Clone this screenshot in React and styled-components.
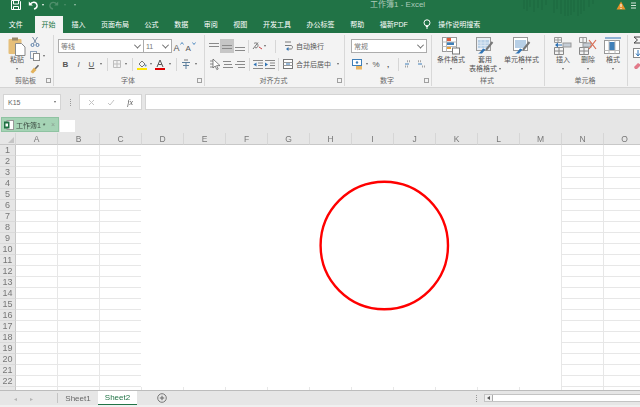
import React from 'react';
import styled, { createGlobalStyle } from 'styled-components';

const GlobalStyle = createGlobalStyle`
  html, body {
    margin: 0;
    padding: 0;
    background: #e6e6e6;
  }
  * {
    box-sizing: border-box;
  }
`;

const Page = styled.div`
  width: 640px;
  height: 407px;
  overflow: hidden;
  display: flex;
  flex-direction: column;
  font-family: "Liberation Sans", "Noto Sans CJK SC", sans-serif;
  font-size: 7px;
  color: #555;
  filter: blur(0.3px);
`;

const TitleBar = styled.div`
  height: 16px;
  flex: none;
  background: #217346;
  display: flex;
  align-items: flex-start;
  padding-left: 11px;
  color: #c3dccd;
`;

const QatSlot = styled.div`
  width: ${(p) => p.$w}px;
  height: 10px;
  flex: none;
  display: flex;
  align-items: center;
  justify-content: ${(p) => p.$justify || 'center'};
`;

const WindowTitle = styled.div`
  margin-left: 287px;
  width: 158px;
  height: 10px;
  line-height: 10px;
  white-space: nowrap;
  font-size: 8px;
  opacity: 0.85;
`;

const TabRow = styled.div`
  height: 17px;
  flex: none;
  background: #217346;
  display: flex;
  padding-left: 1px;
  color: #fff;
`;

const Tab = styled.div`
  padding: 0 7.8px 2px;
  height: 17px;
  display: flex;
  align-items: center;
  white-space: nowrap;
  gap: 7px;
`;

const ActiveTab = styled(Tab)`
  background: #f3f3f3;
  color: #217346;
  padding: 0 7px 2px;
  margin: 0 1px 0 4px;
`;

const Ribbon = styled.div`
  height: 55px;
  flex: none;
  background: #f3f3f3;
  border-bottom: 1px solid #d4d4d4;
  display: flex;
`;

const Group = styled.div`
  width: ${(p) => p.$w}px;
  flex: none;
  display: flex;
  flex-direction: column;
  border-right: 1px solid #d8d8d8;
  margin: 2px 0 1px;
  padding-left: ${(p) => p.$pad || 0}px;
`;

const GroupBody = styled.div`
  flex: 1;
  display: flex;
  min-height: 0;
`;

const Stack = styled.div`
  display: flex;
  flex-direction: column;
  margin-left: ${(p) => p.$left || 0}px;
`;

const ToolsColumn = styled(Stack)`
  padding-left: 5px;
  gap: 4px;
  margin-top: 3px;
`;

const GroupFooter = styled.div`
  height: 12px;
  flex: none;
  display: grid;
  grid-template-columns: 1fr auto 1fr;
  align-items: center;
  color: #666;
  margin-left: ${(p) => -(p.$pad || 0)}px;
  padding-right: 2px;
`;

const Launcher = styled.div`
  grid-column: 3;
  justify-self: end;
  width: 5px;
  height: 5px;
  border: 1px solid #a0a0a0;
`;

const GroupLabel = styled.div`
  grid-column: 2;
  white-space: nowrap;
`;

const Row = styled.div`
  display: flex;
  align-items: center;
  height: ${(p) => p.$h || 14}px;
  margin-top: ${(p) => p.$top || 0}px;
`;

const Slot = styled.div`
  width: ${(p) => p.$w || 12}px;
  height: 14px;
  flex: none;
  display: flex;
  align-items: center;
  justify-content: center;
  background: ${(p) => (p.$on ? '#c6c6c6' : 'transparent')};
  color: #555;
  font-weight: ${(p) => (p.$bold ? 700 : 400)};
  font-style: ${(p) => (p.$italic ? 'italic' : 'normal')};
  text-decoration: ${(p) => (p.$under ? 'underline' : 'none')};
  font-size: ${(p) => p.$size || 8}px;
`;

const Caret = styled.span`
  display: block;
  width: 0;
  height: 0;
  border-left: 1.5px solid transparent;
  border-right: 1.5px solid transparent;
  border-top: 2px solid ${(p) => p.$color || '#666'};
`;

const Divider = styled.div`
  width: ${(p) => p.$w || 7}px;
  height: 13px;
  flex: none;
  display: flex;
  justify-content: center;
  &::before {
    content: '';
    width: 1px;
    background: #d6d6d6;
  }
`;

const Select = styled.div`
  width: ${(p) => p.$w}px;
  height: 14px;
  flex: none;
  background: #fff;
  border: 1px solid #acacac;
  display: flex;
  align-items: center;
  justify-content: space-between;
  padding: 0 3px 0 2px;
  color: #777;
  margin-left: -1px;
`;

const Chevron = styled.span`
  width: 5px;
  height: 5px;
  border-right: 1px solid #666;
  border-bottom: 1px solid #666;
  transform: rotate(45deg) translate(-1px, -1px);
`;

const TextAction = styled.div`
  display: flex;
  align-items: center;
  gap: 1px;
  white-space: nowrap;
  color: #555;
  margin-left: ${(p) => p.$left || 0}px;
`;

const BigButton = styled.div`
  width: ${(p) => p.$w}px;
  flex: none;
  display: flex;
  flex-direction: column;
  align-items: center;
  line-height: 9px;
  white-space: nowrap;
  color: #555;
  padding-top: 2px;
  margin-right: ${(p) => p.$gap || 0}px;
`;

const BigIcon = styled.div`
  height: 18px;
  display: flex;
  align-items: flex-start;
`;

const CaretLine = styled.div`
  height: 9px;
  display: flex;
  align-items: center;
  gap: 2px;
`;

const FormulaRow = styled.div`
  height: 22px;
  flex: none;
  background: #e6e6e6;
  padding: 6px 0 0 3px;
  display: flex;
`;

const NameBox = styled.div`
  width: 58px;
  background: #fff;
  border: 1px solid #d4d4d4;
  display: flex;
  align-items: center;
  justify-content: space-between;
  padding: 0 4px;
  font-size: 7px;
  color: #666;
`;

const Grip = styled.div`
  width: 18px;
  display: flex;
  justify-content: center;
  align-items: center;
  &::before {
    content: '';
    height: 7px;
    border-left: 1px dotted #999;
  }
`;

const FxBox = styled.div`
  width: 63px;
  background: #fff;
  border: 1px solid #d4d4d4;
  display: flex;
  align-items: center;
  justify-content: space-around;
  padding: 0 2px;
`;

const FxLabel = styled.span`
  font-style: italic;
  font-family: "Liberation Serif", serif;
  font-size: 8px;
`;

const FormulaInput = styled.div`
  flex: 1;
  margin-left: 3px;
  background: #fff;
  border: 1px solid #d4d4d4;
  border-right: none;
`;

const BookStrip = styled.div`
  height: 23px;
  flex: none;
  background: #e6e6e6;
  display: flex;
  align-items: flex-end;
  padding: 0 0 1px 1px;
`;

const BookTab = styled.div`
  width: 58px;
  height: 15px;
  background: #a5d3b5;
  border: 1px solid #8fc3a2;
  display: flex;
  align-items: center;
  padding: 0 3px 0 2px;
  gap: 2px;
  color: #3c4a41;
  white-space: nowrap;
`;

const BookClose = styled.span`
  margin-left: auto;
  color: #8a9d90;
  font-size: 7px;
`;

const NewBook = styled.div`
  width: 15px;
  height: 12px;
  background: #fff;
  margin-left: 1px;
`;

const Sheet = styled.div`
  flex: 1;
  min-height: 0;
  position: relative;
  background: #fff;
  overflow: hidden;
  display: grid;
  grid-template-columns: 16px repeat(15, 42px);
  grid-template-rows: 12px;
  grid-auto-rows: 11px;
`;

const HeaderCell = styled.div`
  background: #e6e6e6;
  border-right: 1px solid #d6d6d6;
  border-bottom: 1px solid #c8c8c8;
  display: flex;
  align-items: center;
  justify-content: center;
  font-size: 8.5px;
  color: #777;
`;

const Corner = styled(HeaderCell)`
  justify-content: flex-end;
  align-items: flex-end;
  padding: 0 1px 1px 0;
  &::after {
    content: '';
    border-left: 6px solid transparent;
    border-bottom: 6px solid #c4c4c4;
  }
`;

const RowHead = styled(HeaderCell)`
  border-bottom: 1px solid #dadada;
  border-right: 1px solid #c8c8c8;
  font-size: 9px;
`;

const Cell = styled.div`
  border-right: 1px solid #e7e7e7;
  border-bottom: 1px solid #e7e7e7;
`;

// the white picture pasted over the cells, the circle sits on it
const PastedShape = styled.svg`
  position: absolute;
  left: 141px;
  top: 12px;
  display: block;
`;

const SheetBar = styled.div`
  height: 15px;
  flex: none;
  background: #e6e6e6;
  border-top: 1px solid #bcbcbc;
  display: flex;
  align-items: stretch;
`;

const NavArrows = styled.div`
  width: 58px;
  display: flex;
  align-items: center;
  gap: 13px;
  padding-left: 14px;
  border-right: 1px solid #c4c4c4;
  margin: 2px 0;
  color: #b5b5b5;
  font-size: 6px;
`;

const SheetTab = styled.div`
  width: ${(p) => p.$w}px;
  display: flex;
  align-items: center;
  justify-content: center;
  font-size: 8px;
  color: ${(p) => (p.$on ? '#217346' : '#666')};
  background: ${(p) => (p.$on ? '#fff' : 'transparent')};
  border-bottom: ${(p) => (p.$on ? '1px solid #217346' : 'none')};
`;

const AddSheet = styled.div`
  margin-left: 20px;
  display: flex;
  align-items: center;
`;

const ScrollZone = styled.div`
  margin-left: auto;
  width: 164px;
  display: flex;
  align-items: center;
  gap: 7px;
`;

const VGrip = styled.div`
  height: 7px;
  border-left: 1px dotted #999;
`;

const ScrollBar = styled.div`
  flex: 1;
  height: 8px;
  background: #fff;
  border: 1px solid #c4c4c4;
  border-right: none;
  display: flex;
`;

const ScrollArrow = styled.div`
  width: 8px;
  border-right: 1px solid #aaa;
  background: #f1f1f1;
  display: flex;
  align-items: center;
  justify-content: center;
  &::before {
    content: '';
    border-right: 3px solid #555;
    border-top: 2px solid transparent;
    border-bottom: 2px solid transparent;
  }
`;

const BottomStrip = styled.div`
  height: 2px;
  flex: none;
  background: #f0f0f0;
`;

const Ico = ({ w = 12, h = 12, children }) => (
  <svg width={w} height={h} viewBox={`0 0 ${w} ${h}`} fill="none">
    {children}
  </svg>
);

const Lines = ({ ys, x1 = 1, x2 = 11, c = '#8a8a8a' }) => (
  <path d={ys.map((y) => `M${x1} ${y}H${x2}`).join('')} stroke={c} />
);

const SaveIcon = () => (
  <Ico w={10} h={10}>
    <path d="M.5.5h8l1 1v8h-9z" stroke="#fff" />
    <path d="M2.5 1v3h5V1M2.5 9.5V6.5h5v3" stroke="#fff" />
  </Ico>
);

const UndoIcon = () => (
  <Ico w={10} h={10}>
    <path d="M2 4.5c2-3 6-3 7 .5.4 2-1 3.5-3 4" stroke="#fff" strokeWidth="1.4" />
    <path d="M.8 1.5v4h4z" fill="#fff" />
  </Ico>
);

const RedoIcon = () => (
  <Ico w={10} h={10}>
    <path d="M8 4.5c-2-3-6-3-7 .5-.4 2 1 3.5 3 4" stroke="#4f8f6b" strokeWidth="1.3" />
    <path d="M9.2 1.5v4h-4z" fill="#4f8f6b" />
  </Ico>
);

const stripes = [
  [0, 9], [3, 11], [6, 7], [10, 12], [14, 8], [18, 10], [22, 5], [30, 13], [33, 9], [37, 14],
  [41, 16], [44, 16], [47, 15], [50, 12], [54, 16], [57, 14], [60, 11], [65, 7], [69, 4],
];

const TitlePattern = () => (
  <svg width="78" height="16" style={{ flex: 'none' }}>
    {stripes.map(([x, h]) => (
      <rect key={x} x={x} y="0" width="2" height={h} fill="#1e6d42" />
    ))}
  </svg>
);

const WarnIcon = () => (
  <Ico w={10} h={9}>
    <path d="M5 .5l4.5 8h-9z" fill="#e8932b" />
    <path d="M5 3v3M5 7v1" stroke="#fff" />
  </Ico>
);

const MenuIcon = () => (
  <Ico w={5} h={7}>
    <path d="M0 1h5M0 3.5h5M0 6h5" stroke="#d5e6db" />
  </Ico>
);

const BulbIcon = () => (
  <Ico w={8} h={10}>
    <circle cx="4" cy="3.8" r="3" stroke="#fff" />
    <path d="M2.8 7.5h2.4M3 9h2" stroke="#fff" />
  </Ico>
);

const PasteIcon = () => (
  <Ico w={18} h={19}>
    <rect x="0.5" y="2" width="13" height="15" rx="1" fill="#e6bf7a" />
    <rect x="4" y="0.5" width="6" height="3" fill="#9a8a6c" />
    <path d="M7.5 6.5h6l3.5 3.5v8.5H7.5z" fill="#fff" stroke="#8a8a8a" />
  </Ico>
);

const ScissorsIcon = () => (
  <Ico w={10} h={10}>
    <path d="M2.5 0l4 6.5M7.5 0l-4 6.5" stroke="#7a8ea6" />
    <circle cx="2.5" cy="8" r="1.5" stroke="#5a7ea8" />
    <circle cx="7.5" cy="8" r="1.5" stroke="#5a7ea8" />
  </Ico>
);

const CopyIcon = () => (
  <Ico w={10} h={10}>
    <rect x=".5" y=".5" width="6" height="7" fill="#f7f7f7" stroke="#8da3bd" />
    <rect x="3.5" y="2.5" width="6" height="7" fill="#fff" stroke="#8a8a8a" />
  </Ico>
);

const BrushIcon = () => (
  <Ico w={10} h={10}>
    <path d="M5 5L8.5 1.2" stroke="#666" strokeWidth="1.6" />
    <path d="M.5 8l3.5-4.5 2.5 2.5L3 9.5z" fill="#e2b25c" />
  </Ico>
);

const ResizeFontIcon = ({ up, size }) => (
  <Ico w={11} h={11}>
    <text x="0.5" y="10" fontSize={size} fill="#555" fontFamily="Liberation Sans, sans-serif">A</text>
    <path d={up ? 'M7.5 3.5L9 1.5l1.5 2' : 'M7.5 1.5L9 3.5l1.5-2'} stroke="#2f73b5" strokeWidth=".8" />
  </Ico>
);

const BorderIcon = () => (
  <Ico w={10} h={10}>
    <path d="M1.5 1.5h7v7h-7zM5 1.5v7M1.5 5h7" stroke="#bdbdbd" />
  </Ico>
);

const FillIcon = () => (
  <Ico w={10} h={11}>
    <path d="M2 5l3-3 3 3-3 3z" fill="#f4f4f4" stroke="#777" />
    <circle cx="8.6" cy="6.5" r="1" fill="#5c8ec0" />
    <rect x="0" y="9" width="10" height="2" fill="#ffe600" />
  </Ico>
);

const FontColorIcon = () => (
  <Ico w={10} h={11}>
    <path d="M2 8l3-7 3 7M3.2 5.5h3.6" stroke="#555" />
    <rect x="0" y="9" width="10" height="2" fill="#e00000" />
  </Ico>
);

const PhoneticIcon = () => (
  <Ico w={10} h={11}>
    <path d="M1 3.5h8M5 3v7M2 6.5h6" stroke="#5d7f9c" />
    <path d="M3 1h4" stroke="#777" />
  </Ico>
);

const AlignV = ({ ys }) => (
  <Ico>
    <Lines ys={ys} />
  </Ico>
);

const AlignH = ({ lines }) => (
  <Ico>
    {lines.map(([y, x1, x2]) => (
      <path key={y} d={`M${x1} ${y}H${x2}`} stroke="#8a8a8a" />
    ))}
  </Ico>
);

const OrientIcon = () => (
  <Ico w={11} h={10}>
    <path d="M1 8L6 1.5M2 2.5c2-1.5 4 0 4 2s-2 3-3 2" stroke="#777" />
    <path d="M7 6l3 2" stroke="#c44" />
  </Ico>
);

const CursorIcon = () => (
  <Ico w={12} h={13}>
    <path d="M1 3h4M1 6h3M1 9h3" stroke="#8a8a8a" />
    <path d="M4 1v9l2.2-2 1.6 3.6 1.4-.6-1.6-3.4H11z" fill="#fff" stroke="#555" strokeWidth=".7" />
  </Ico>
);

const IndentIcon = ({ flip }) => (
  <Ico w={10} h={9}>
    <path d="M0 .5h10M5 3h5M5 5.5h5M0 8.5h10" stroke="#8a8a8a" />
    <path d={flip ? 'M0 2.5v4l3-2z' : 'M3.5 2.5v4l-3-2z'} fill="#2f73b5" />
  </Ico>
);

const WrapIcon = () => (
  <Ico w={9} h={10}>
    <path d="M1 1h6M1 4.5h6c2 0 2 3.5 0 3.5H4" stroke="#7b7b7b" />
    <path d="M4.5 6v4L2 8z" fill="#2f73b5" />
  </Ico>
);

const MergeIcon = () => (
  <Ico w={10} h={10}>
    <rect x=".5" y=".5" width="9" height="9" fill="#fff" stroke="#777" />
    <path d="M.5 3.5h9M.5 6.5h9" stroke="#999" />
    <path d="M3 5h4" stroke="#2f73b5" />
  </Ico>
);

const AccountingIcon = () => (
  <Ico w={11} h={11}>
    <rect x=".5" y=".5" width="9" height="6" fill="#fff" stroke="#3f7fb8" />
    <circle cx="5" cy="3.5" r="1.2" fill="#3f7fb8" />
    <rect x="4" y="7" width="6" height="3.5" fill="#eab562" />
  </Ico>
);

const DecimalIcon = ({ more }) => (
  <Ico w={10} h={10}>
    <path d={more ? 'M3 2.2h4M1 7.5h4' : 'M1 2.2h4M5 7.5h4'} stroke="#a5a5a5" strokeDasharray="1 1" strokeWidth="2" />
    <path d="M1 5h4" stroke="#3f7fb8" />
  </Ico>
);

const CondIcon = () => (
  <Ico w={18} h={18}>
    <rect x=".5" y=".5" width="14" height="14" fill="#fff" stroke="#9a9a9a" />
    <rect x="5" y="1" width="4" height="3" fill="#e05a3a" />
    <rect x="5" y="5" width="7" height="3" fill="#3f7fb8" />
    <rect x="5" y="9" width="4" height="3" fill="#e8a23a" />
    <path d="M.5 5h14M.5 9.5h14M4.5.5v14" stroke="#bbb" />
    <rect x="10.5" y="11" width="7" height="6" fill="#fff" stroke="#777" />
  </Ico>
);

const TableFormatIcon = ({ light }) => (
  <Ico w={18} h={18}>
    <rect x=".5" y=".5" width="14" height="13" fill={light ? '#fff' : '#e9eef5'} stroke="#999" />
    <rect x="2" y="3" width="11" height="8" fill="#b7cfe6" />
    {!light && <path d="M5 3v8M9 3v8M2 6h11M2 8.5h11" stroke="#dbe6f2" />}
    <path d="M16.5 5L10 13" stroke="#777" strokeWidth="2" />
    <path d="M9.5 12.5L6 16.5h-4c2-.5 3.5-3 5-5z" fill="#2f73b5" />
  </Ico>
);

const CellGrid = () => (
  <path d="M.5 10.5h9v7h-9zM5 10.5v7M.5 14h9" stroke="#888" />
);

const InsertIcon = () => (
  <Ico w={18} h={18}>
    <path d="M.5.5h7v5h-7zM.5 3h7M4 .5v5" stroke="#999" />
    <CellGrid />
    <rect x="9" y="6" width="8" height="4" fill="#c5cdd6" stroke="#999" />
    <path d="M8 8H2" stroke="#2f73b5" />
    <path d="M4 5.5v5L1 8z" fill="#2f73b5" />
  </Ico>
);

const DeleteIcon = () => (
  <Ico w={18} h={18}>
    <path d="M.5.5h7v5h-7zM4 .5v5" stroke="#999" />
    <CellGrid />
    <rect x="4" y="6" width="8" height="4" fill="#c5cdd6" stroke="#999" />
    <path d="M10 3l7 9M17 3l-7 9" stroke="#d96a50" strokeWidth="1.2" />
  </Ico>
);

const FormatIcon = () => (
  <Ico w={18} h={18}>
    <path d="M1 1h16" stroke="#2f73b5" />
    <rect x=".5" y="3.5" width="15" height="13" fill="#fff" stroke="#999" />
    <rect x="5" y="5" width="6" height="8" fill="#3f7fb8" />
    <path d="M5 3.5v13M11 3.5v13M.5 13.5h15" stroke="#bbb" />
  </Ico>
);

const SumIcon = () => (
  <Ico w={9} h={8}>
    <path d="M8 1H1l3.5 3L1 7h7" stroke="#444" />
  </Ico>
);

const FillDownIcon = () => (
  <Ico w={9} h={10}>
    <rect x=".5" y=".5" width="8" height="9" fill="#fff" stroke="#888" />
    <path d="M5 2v5M3 5.5L5 8l2-2.5" stroke="#2f73b5" />
  </Ico>
);

const EraserIcon = () => (
  <Ico w={9} h={8}>
    <path d="M1 5l4-4 3 2-4 4H2z" fill="#e27a8a" />
  </Ico>
);

const BookIcon = () => (
  <Ico w={10} h={10}>
    <rect x="3" y=".5" width="6.5" height="9" fill="#fff" stroke="#999" />
    <rect x="0" y="1.5" width="5.5" height="7" fill="#1e6e42" />
    <rect x="1.5" y="3.5" width="2.5" height="3" fill="#fff" />
  </Ico>
);

const PlusCircle = () => (
  <Ico w={10} h={10}>
    <circle cx="5" cy="5" r="4.3" stroke="#777" />
    <path d="M2.8 5h4.4M5 2.8v4.4" stroke="#666" />
  </Ico>
);

const columns = 'ABCDEFGHIJKLMNO'.split('');
const rowNumbers = Array.from({ length: 23 }, (_, i) => i + 1);

const tabs = ['插入', '页面布局', '公式', '数据', '审阅', '视图', '开发工具', '办公标签', '帮助', '福新PDF'];

const Footer = ({ label, pad, launcher = true }) => (
  <GroupFooter $pad={pad}>
    <GroupLabel>{label}</GroupLabel>
    {launcher && <Launcher />}
  </GroupFooter>
);

const bigStyles = [
  { w: 36, icon: <CondIcon />, lines: ['条件格式'] },
  { w: 30, icon: <TableFormatIcon />, lines: ['套用', '表格格式'] },
  { w: 41, icon: <TableFormatIcon light />, lines: ['单元格样式'] },
];

const bigCells = [
  { icon: <InsertIcon />, label: '插入' },
  { icon: <DeleteIcon />, label: '删除' },
  { icon: <FormatIcon />, label: '格式' },
];

export default function App() {
  return (
    <>
      <GlobalStyle />
      <Page>
        <TitleBar>
          <QatSlot $w={14} $justify="flex-start"><SaveIcon /></QatSlot>
          <QatSlot $w={16}><UndoIcon /></QatSlot>
          <QatSlot $w={4}><Caret $color="#fff" /></QatSlot>
          <QatSlot $w={18}><RedoIcon /></QatSlot>
          <QatSlot $w={4}><Caret $color="#4f8f6b" /></QatSlot>
          <QatSlot $w={16}><Caret $color="#9cc4ad" /></QatSlot>
          <WindowTitle>工作簿1 - Excel</WindowTitle>
          <TitlePattern />
          <QatSlot $w={25} $justify="flex-end"><WarnIcon /></QatSlot>
          <QatSlot $w={14}><MenuIcon /></QatSlot>
        </TitleBar>

        <TabRow>
          <Tab>文件</Tab>
          <ActiveTab>开始</ActiveTab>
          {tabs.map((t) => (
            <Tab key={t}>{t}</Tab>
          ))}
          <Tab>
            <BulbIcon />
            操作说明搜索
          </Tab>
        </TabRow>

        <Ribbon>
          <Group $w={54}>
            <GroupBody>
              <BigButton $w={34}>
                <BigIcon><PasteIcon /></BigIcon>
                粘贴
                <CaretLine><Caret /></CaretLine>
              </BigButton>
              <Stack $left={-4}>
                <Row $h={14}><Slot $w={10}><ScissorsIcon /></Slot></Row>
                <Row $h={13}>
                  <Slot $w={10}><CopyIcon /></Slot>
                  <Slot $w={7}><Caret /></Slot>
                </Row>
                <Row $h={13}><Slot $w={10}><BrushIcon /></Slot></Row>
              </Stack>
            </GroupBody>
            <Footer label="剪贴板" />
          </Group>

          <Group $w={151} $pad={5}>
            <GroupBody>
              <Stack>
                <Row $top={4}>
                  <Select $w={86}>等线<Chevron /></Select>
                  <Select $w={29}>11<Chevron /></Select>
                  <Slot $w={13}><ResizeFontIcon up size={9} /></Slot>
                  <Slot $w={11}><ResizeFontIcon size={8} /></Slot>
                </Row>
                <Row $top={4}>
                  <Slot $w={13} $bold>B</Slot>
                  <Slot $w={13} $italic>I</Slot>
                  <Slot $w={13} $under>U</Slot>
                  <Slot $w={6}><Caret /></Slot>
                  <Divider />
                  <Slot $w={12}><BorderIcon /></Slot>
                  <Slot $w={6}><Caret /></Slot>
                  <Divider />
                  <Slot $w={11}><FillIcon /></Slot>
                  <Slot $w={7}><Caret /></Slot>
                  <Slot $w={12}><FontColorIcon /></Slot>
                  <Slot $w={7}><Caret /></Slot>
                  <Divider />
                  <Slot $w={12}><PhoneticIcon /></Slot>
                  <Slot $w={7}><Caret /></Slot>
                </Row>
              </Stack>
            </GroupBody>
            <Footer label="字体" pad={5} />
          </Group>

          <Group $w={140} $pad={3}>
            <GroupBody>
              <Stack>
                <Row $top={4}>
                  <Slot $w={12}><AlignV ys={[3.5, 6.5]} /></Slot>
                  <Slot $w={14} $on><AlignV ys={[5.5, 8.5]} /></Slot>
                  <Slot $w={12}><AlignV ys={[7.5, 10.5]} /></Slot>
                  <Divider $w={4} />
                  <Slot $w={14}><OrientIcon /></Slot>
                  <Caret />
                  <Divider $w={18} />
                  <TextAction><WrapIcon />&nbsp;自动换行</TextAction>
                </Row>
                <Row $top={4}>
                  <Slot $w={13}><CursorIcon /></Slot>
                  <Slot $w={13}><AlignH lines={[[3.5, 1, 9], [6.5, 2, 10], [9.5, 1, 11]]} /></Slot>
                  <Slot $w={12}><AlignH lines={[[3.5, 3, 11], [6.5, 1, 11], [9.5, 4, 11]]} /></Slot>
                  <Divider $w={6} />
                  <Slot $w={11}><IndentIcon /></Slot>
                  <Slot $w={13}><IndentIcon flip /></Slot>
                  <Divider $w={4} />
                  <TextAction $left={3}>
                    <MergeIcon />&nbsp;合并后居中
                    <Slot $w={12}><Caret /></Slot>
                  </TextAction>
                </Row>
              </Stack>
            </GroupBody>
            <Footer label="对齐方式" pad={3} />
          </Group>

          <Group $w={87} $pad={7}>
            <GroupBody>
              <Stack>
                <Row $top={4}>
                  <Select $w={76}>常规<Chevron /></Select>
                </Row>
                <Row $top={4}>
                  <Slot $w={11}><AccountingIcon /></Slot>
                  <Slot $w={7}><Caret /></Slot>
                  <Slot $w={12} $size={8}>%</Slot>
                  <Slot $w={12} $bold $size={8}>,</Slot>
                  <Divider $w={8} />
                  <Slot $w={13}><DecimalIcon more /></Slot>
                  <Slot $w={13}><DecimalIcon /></Slot>
                </Row>
              </Stack>
            </GroupBody>
            <Footer label="数字" pad={7} />
          </Group>

          <Group $w={113} $pad={1}>
            <GroupBody>
              {bigStyles.map((b) => (
                <BigButton key={b.lines[0]} $w={b.w} $gap={1}>
                  <BigIcon>{b.icon}</BigIcon>
                  {b.lines[0]}
                  <CaretLine>
                    {b.lines[1]}
                    <Caret />
                  </CaretLine>
                </BigButton>
              ))}
            </GroupBody>
            <Footer label="样式" pad={1} launcher={false} />
          </Group>

          <Group $w={83} $pad={6}>
            <GroupBody>
              {bigCells.map((b) => (
                <BigButton key={b.label} $w={24} $gap={1}>
                  <BigIcon>{b.icon}</BigIcon>
                  {b.label}
                  <CaretLine><Caret /></CaretLine>
                </BigButton>
              ))}
            </GroupBody>
            <Footer label="单元格" pad={6} launcher={false} />
          </Group>

          <ToolsColumn>
            <SumIcon />
            <FillDownIcon />
            <EraserIcon />
          </ToolsColumn>
        </Ribbon>

        <FormulaRow>
          <NameBox>K15<Caret /></NameBox>
          <Grip />
          <FxBox>
            <Ico w={7} h={7}><path d="M1 1l5 5M6 1L1 6" stroke="#c4c4c4" /></Ico>
            <Ico w={8} h={7}><path d="M1 4l2 2 4-5" stroke="#c4c4c4" /></Ico>
            <FxLabel>fx</FxLabel>
          </FxBox>
          <FormulaInput />
        </FormulaRow>

        <BookStrip>
          <BookTab>
            <BookIcon />
            工作簿1 *
            <BookClose>×</BookClose>
          </BookTab>
          <NewBook />
        </BookStrip>

        <Sheet>
          <Corner />
          {columns.map((c) => (
            <HeaderCell key={c}>{c}</HeaderCell>
          ))}
          {rowNumbers.map((n) => (
            <React.Fragment key={n}>
              {/* row 23 is only a sliver above the sheet bar, its number does not show */}
              <RowHead>{n < 23 ? n : ''}</RowHead>
              {columns.map((c) => (
                <Cell key={c} />
              ))}
            </React.Fragment>
          ))}
          <PastedShape width="420" height="242" viewBox="0 0 420 242">
            <rect width="420" height="242" fill="#fff" />
            <circle cx="243.3" cy="100.5" r="63.7" fill="none" stroke="#ff0000" strokeWidth="2.4" />
          </PastedShape>
        </Sheet>

        <SheetBar>
          <NavArrows><span>◂</span><span>▸</span></NavArrows>
          <SheetTab $w={40}>Sheet1</SheetTab>
          <SheetTab $w={39} $on>Sheet2</SheetTab>
          <AddSheet><PlusCircle /></AddSheet>
          <ScrollZone>
            <VGrip />
            <ScrollBar><ScrollArrow /></ScrollBar>
          </ScrollZone>
        </SheetBar>
        <BottomStrip />
      </Page>
    </>
  );
}
